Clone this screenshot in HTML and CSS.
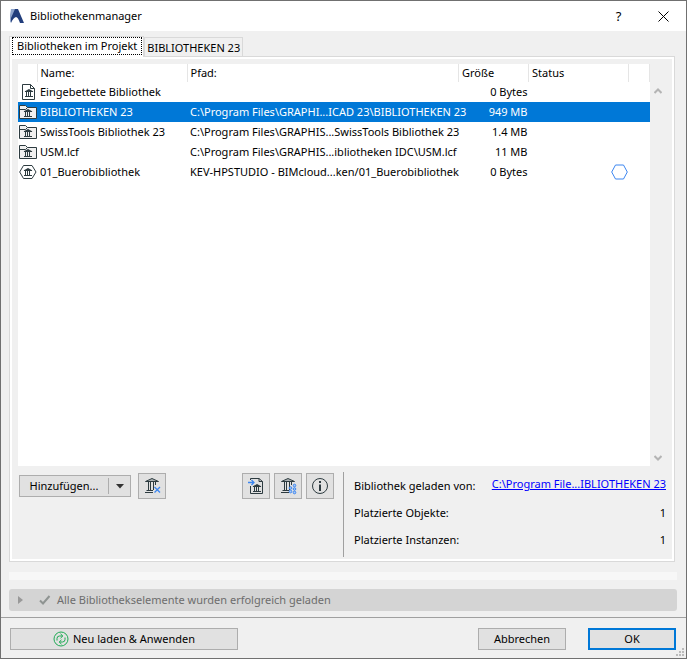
FILE: index.html
```
<!DOCTYPE html>
<html lang="de">
<head>
    <meta charset="UTF-8">
    <title>Bibliothekenmanager</title>
    <link rel="stylesheet" href="styles.css">
</head>
<body>
<!-- Icons -->
<svg class="defs" width="0" height="0">
    <symbol id="temple" viewBox="0 0 10 8">
        <path d="M0.5 2.500L5 0L9.500 2.500Z" fill="#2d3b40"/>
        <path d="M1 2.500H9M2.500 3V7M4.500 3V7M6.500 3V7M1 7.500H9" fill="none" stroke="#2d3b40"/>
    </symbol>
    <symbol id="folder" viewBox="0 0 18 16">
        <path d="M0.5 14.500V1.500H6.500L8.500 3.500H17.500V14.500Z" fill="#f0f0f0" stroke="#2d3b40"/>
        <path d="M0.5 5.500H6.500L8.500 3.500" fill="none" stroke="#2d3b40"/>
        <use href="#temple" x="4" y="5" width="10" height="8"/>
    </symbol>
    <symbol id="big-temple" viewBox="0 0 18 18">
        <path d="M2.500 4.500L9 1.500L15.500 4.500Z" fill="#aab0b2" stroke="#2d3b40"/>
        <path d="M5.500 5V13M7.500 5V13M10.500 5V13M12.500 5V8M3.500 13.500H10M2 15.500H10" fill="none" stroke="#2d3b40"/>
    </symbol>
</svg>

<div class="window">
    <header class="titlebar">
        <svg class="logo" width="14" height="15" viewBox="0 0 14 15">
            <path d="M1 0H6L4 8L0 14V6Z" fill="#8fa5cc"/>
            <path d="M5 0H8L14 14H10Q8 8 6 8Q3 9 1 14V9Z" fill="#223e7c"/>
        </svg>
        <h1>Bibliothekenmanager</h1>
        <button class="title-btn" aria-label="Hilfe">?</button>
        <button class="title-btn" aria-label="Schließen">
            <svg width="11" height="11" viewBox="0 0 11 11"><path d="M0.500 0.500L10.500 10.500M10.500 0.500L0.500 10.500" stroke="#000" fill="none"/></svg>
        </button>
    </header>

    <main class="main">
        <div class="tabs" role="tablist">
            <button class="tab active" role="tab" aria-selected="true"><span>Bibliotheken im Projekt</span></button>
            <button class="tab" role="tab" aria-selected="false">BIBLIOTHEKEN 23</button>
        </div>
        <div class="panel">
            <div class="list">
                <div class="list-body">
                    <table>
                        <colgroup>
                            <col class="col-icon"><col class="col-name"><col><col class="col-size"><col class="col-status"><col class="col-end">
                        </colgroup>
                        <thead>
                            <tr><th></th><th>Name:</th><th>Pfad:</th><th>Größe</th><th>Status</th><th></th></tr>
                        </thead>
                        <tbody>
                            <tr>
                                <td><svg width="18" height="18" viewBox="0 0 18 18"><path d="M3.500 1.500H11.500L15.500 5.500V16.500H3.500Z" fill="#fff" stroke="#2d3b40"/><path d="M11.500 1.500V5.500H15.500" fill="none" stroke="#2d3b40"/><use href="#temple" x="5" y="6" width="10" height="8"/></svg></td>
                                <td>Eingebettete Bibliothek</td><td></td><td>0 Bytes</td><td></td><td></td>
                            </tr>
                            <tr class="selected">
                                <td><svg width="18" height="16"><use href="#folder"/></svg></td>
                                <td>BIBLIOTHEKEN 23</td><td>C:\Program Files\GRAPHI...ICAD 23\BIBLIOTHEKEN 23</td><td>949 MB</td><td></td><td></td>
                            </tr>
                            <tr>
                                <td><svg width="18" height="16"><use href="#folder"/></svg></td>
                                <td>SwissTools Bibliothek 23</td><td>C:\Program Files\GRAPHIS...SwissTools Bibliothek 23</td><td>1.4 MB</td><td></td><td></td>
                            </tr>
                            <tr>
                                <td><svg width="18" height="16"><use href="#folder"/></svg></td>
                                <td>USM.lcf</td><td>C:\Program Files\GRAPHIS...ibliotheken IDC\USM.lcf</td><td>11 MB</td><td></td><td></td>
                            </tr>
                            <tr>
                                <td><svg width="18" height="16" viewBox="0 0 18 16"><path d="M4.500 1.500H13L17 8L13 14.500H4.500L0.700 8Z" fill="#fff" stroke="#2d3b40"/><use href="#temple" x="4" y="4" width="10" height="8"/></svg></td>
                                <td>01_Buerobibliothek</td><td>KEV-HPSTUDIO - BIMcloud...ken/01_Buerobibliothek</td><td>0 Bytes</td>
                                <td class="state"><svg width="17" height="16" viewBox="0 0 17 16"><path d="M4.500 1H12.500L16.300 8L12.500 15H4.500L0.700 8Z" fill="none" stroke="#3c86f0"/></svg></td><td></td>
                            </tr>
                        </tbody>
                    </table>
                </div>
                <div class="scrollbar">
                    <svg width="8" height="6" viewBox="0 0 8 6"><path d="M0.500 5L4 1.500L7.500 5" fill="none" stroke="#b4b4b4" stroke-width="2"/></svg>
                    <svg width="8" height="6" viewBox="0 0 8 6"><path d="M0.500 1L4 4.500L7.500 1" fill="none" stroke="#b4b4b4" stroke-width="2"/></svg>
                </div>
            </div>

            <div class="details">
                <div class="tools">
                    <button class="btn add-btn">
                        <span>Hinzufügen...</span>
                        <i><svg width="8" height="5" viewBox="0 0 8 5"><path d="M0 0H8L4 4.500Z" fill="#333"/></svg></i>
                    </button>
                    <button class="btn icon-btn" aria-label="Bibliothek entfernen">
                        <svg width="18" height="18" viewBox="0 0 18 18"><use href="#big-temple"/><path d="M11.500 10L17 15.500M17 10L11.500 15.500" stroke="#3c86f0" stroke-width="1.300" fill="none"/></svg>
                    </button>
                    <div class="tool-group">
                        <button class="btn icon-btn" aria-label="Einbetten">
                            <svg width="18" height="18" viewBox="0 0 18 18"><path d="M3.500 9V16.500H15.500V4.500L12 1.500H3.500V3M12 1.500V4.500H15.500" fill="none" stroke="#2d3b40"/><path d="M1 5.500H7M4.500 3L7 5.500L4.500 8" stroke="#3c86f0" stroke-width="1.300" fill="none"/><use href="#temple" x="5" y="7" width="10" height="8"/></svg>
                        </button>
                        <button class="btn icon-btn" aria-label="Duplikate">
                            <svg width="18" height="18" viewBox="0 0 18 18"><use href="#big-temple"/><g fill="#a9c9f5" stroke="#3c86f0"><circle cx="15.500" cy="8.500" r="1.300"/><circle cx="11.500" cy="11" r="1.300"/><circle cx="15.500" cy="12" r="1.300"/><circle cx="11.500" cy="14.500" r="1.300"/><circle cx="15.500" cy="15.500" r="1.300"/></g></svg>
                        </button>
                        <button class="btn icon-btn" aria-label="Info">
                            <svg width="18" height="18" viewBox="0 0 18 18"><circle cx="9" cy="9" r="7.500" fill="none" stroke="#2d3b40"/><path d="M9 4V6M9 7.500V14" stroke="#2d3b40" stroke-width="2"/></svg>
                        </button>
                    </div>
                </div>
                <dl class="info">
                    <div><dt>Bibliothek geladen von:</dt><dd><a href="#">C:\Program File...IBLIOTHEKEN 23</a></dd></div>
                    <div><dt>Platzierte Objekte:</dt><dd>1</dd></div>
                    <div><dt>Platzierte Instanzen:</dt><dd>1</dd></div>
                </dl>
            </div>
        </div>
        <div class="strip"></div>
        <div class="status">
            <svg class="arrow" width="5" height="8" viewBox="0 0 5 8"><path d="M0 0L5 4L0 8Z" fill="#999"/></svg>
            <svg width="12" height="10" viewBox="0 0 12 10"><path d="M1 5.500L4 8.500L10.500 1" fill="none" stroke="#8f9492" stroke-width="2"/></svg>
            <span>Alle Bibliothekselemente wurden erfolgreich geladen</span>
        </div>
    </main>

    <footer class="footer">
        <button class="btn reload-btn">
            <svg width="16" height="16" viewBox="0 0 16 16"><g fill="none" stroke="#1faa55"><circle cx="8" cy="8" r="7"/><path d="M4 9.500V7.500Q4 5 6.500 5H9.500M7.500 2.800L9.800 5L7.500 7.200"/><path d="M12 6.500V8.500Q12 11 9.500 11H6.500M8.500 8.800L6.200 11L8.500 13.200"/></g></svg>
            <span>Neu laden &amp; Anwenden</span>
        </button>
        <button class="btn end-btn cancel-btn">Abbrechen</button>
        <button class="btn end-btn ok-btn">OK</button>
    </footer>
    <svg class="grip" width="9" height="9" viewBox="0 0 9 9"><path d="M6 0H8V2H6ZM3 3H5V5H3ZM6 3H8V5H6ZM0 6H2V8H0ZM3 6H5V8H3ZM6 6H8V8H6Z" fill="#bbb"/></svg>
</div>
</body>
</html>
```

FILE: styles.css
```
* {
    box-sizing: border-box;
}
body {
    margin: 0;
    color: #000;
    font-family: "Noto Sans", "Open Sans", sans-serif;
    font-size: 11px;
    line-height: 16px;
}
button {
    margin: 0;
    padding: 0;
    color: inherit;
    font: inherit;
}
svg {
    display: block;
    flex: none;
}
.defs {
    position: absolute;
}
.window {
    position: relative;
    display: flex;
    flex-direction: column;
    min-height: 100vh;
    border: 1px solid #707070;
    background: #f0f0f0;
}

/* title bar */
.titlebar {
    display: flex;
    align-items: center;
    height: 30px;
    padding-left: 9px;
    background: #fff;
}
.titlebar h1 {
    flex: 1;
    margin: 0 0 0 6px;
    font-size: 11px;
    font-weight: normal;
}
.title-btn {
    display: flex;
    align-items: center;
    justify-content: center;
    width: 45px;
    height: 30px;
    border: 0;
    background: none;
    font-size: 13px;
}

/* tabs and panel */
.main {
    display: flex;
    flex: 1;
    flex-direction: column;
    padding: 5px 9px 6px 8px;
}
.tabs {
    display: flex;
    align-items: flex-end;
}
.tab {
    height: 19px;
    padding: 2px 2px 0;
    border: 1px solid #d9d9d9;
    border-bottom: 0;
    background: #f0f0f0;
    line-height: 16px;
    white-space: nowrap;
}
.tab.active {
    z-index: 1;
    height: 21px;
    margin-bottom: -1px;
    padding: 0 1px 2px 2px;
    background: #fff;
}
.tab.active span {
    display: block;
    padding: 0 4px;
    border: 1px dotted #000;
}
.panel {
    display: flex;
    flex: 1;
    flex-direction: column;
    margin-right: 2px;
    padding: 4px 4px 1px;
    border: 1px solid #d9d9d9;
    background: #f0f0f0;
    box-shadow: inset 0 0 0 2px #fff;
}
.list {
    display: flex;
    flex: 1;
    margin: 3px 4px 0;
}
.list-body {
    flex: 1;
    background: #fff;
}
table {
    width: 100%;
    border-collapse: collapse;
    table-layout: fixed;
}
.col-icon {
    width: 19px;
}
.col-name {
    width: 150px;
}
.col-size {
    width: 70px;
}
.col-status {
    width: 100px;
}
.col-end {
    width: 21px;
}
th, td {
    height: 20px;
    padding: 0 0 0 3px;
    text-align: left;
    font-weight: normal;
    white-space: nowrap;
}
th {
    height: 18px;
    border-right: 1px solid #e5e5e5;
}
td:first-child {
    padding: 0 0 0 1px;
}
td:nth-child(4) {
    padding-right: 1px;
    text-align: right;
}
.state svg {
    margin: 0 1px 0 auto;
}
.selected {
    background: #0078d7;
    color: #fff;
}
.scrollbar {
    display: flex;
    flex-direction: column;
    align-items: center;
    justify-content: space-between;
    width: 16px;
    padding: 24px 0 5px;
}

/* buttons */
.btn {
    display: flex;
    align-items: center;
    justify-content: center;
    height: 22px;
    border: 1px solid #adadad;
    background: #e1e1e1;
}
.details {
    display: flex;
    gap: 9px;
    margin: 6px 4px 3px 5px;
}
.tools {
    display: flex;
    flex: 1;
    align-items: center;
    height: 28px;
}
.add-btn {
    width: 112px;
    margin-right: 7px;
}
.add-btn span {
    flex: 1;
}
.add-btn i {
    display: flex;
    align-items: center;
    justify-content: center;
    width: 22px;
    height: 16px;
    border-left: 1px solid #adadad;
}
.icon-btn {
    width: 28px;
    height: 26px;
}
.tool-group {
    display: flex;
    gap: 4px;
    margin-left: auto;
}
.info {
    width: 323px;
    margin: 0;
    padding: 0 0 4px 10px;
    border-left: 1px solid #a0a0a0;
}
.info div {
    display: flex;
    justify-content: space-between;
    height: 27px;
    line-height: 27px;
}
.info dd {
    margin: 0;
}
.info a {
    display: block;
    color: #00f;
    line-height: 24px;
}
.strip {
    height: 8px;
    margin-top: 10px;
    background: #f7f7f7;
}
.status {
    display: flex;
    align-items: center;
    height: 22px;
    margin-top: 9px;
    padding-left: 9px;
    border-radius: 3px;
    background: #d4d4d4;
    color: #6d6d6d;
}
.status .arrow {
    margin-right: 16px;
}
.status span {
    margin-left: 6px;
}

/* footer */
.footer {
    display: flex;
    padding: 10px 10px 8px 9px;
    border-top: 1px solid #a0a0a0;
}
.reload-btn {
    gap: 4px;
    width: 228px;
    margin-right: auto;
}
.end-btn {
    width: 88px;
}
.cancel-btn {
    margin-right: 22px;
}
.ok-btn {
    border: 2px solid #0078d7;
}
.grip {
    position: absolute;
    right: 1px;
    bottom: 1px;
}
```
